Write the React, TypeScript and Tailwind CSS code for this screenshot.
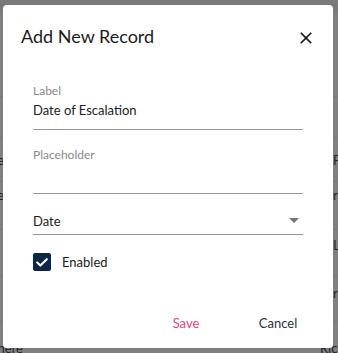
import { FC } from "react";

const rows = [
  { h: "h-[84px]", left: "", right: "", pt: "pt-[20px]", lw: "w-[4px]", rw: "w-[16px]" },
  { h: "h-[41px]", left: "", right: "", pt: "pt-[12px]", lw: "w-[4px]", rw: "w-[16px]" },
  { h: "h-[44px]", left: "Date", right: "Pro", pt: "pt-[14px]", lw: "w-[4px]", rw: "w-[5px]" },
  { h: "h-[48px]", left: "Type", right: "ro", pt: "pt-[5px]", lw: "w-[4px]", rw: "w-[5px]" },
  { h: "h-[47px]", left: "", right: "Lu", pt: "pt-[7px]", lw: "w-[4px]", rw: "w-[5px]" },
  { h: "h-[45px]", left: "", right: "ro", pt: "pt-[8px]", lw: "w-[4px]", rw: "w-[5px]" },
  { h: "h-[40px]", left: "Where", right: "Rick", pt: "pt-[18px]", lw: "w-[23px]", rw: "w-[18px]" },
];

const Field: FC<{ label: string; value?: string }> = ({ label, value }) => (
  <div className="flex flex-col border-b border-[#949494] pb-[10px]">
    <span className="text-[12px] leading-[15px] text-[#8a8a8a]">{label}</span>
    <span className="mt-[4px] h-[17px] text-[13px] leading-[17px] text-[#212121]">
      {value}
    </span>
  </div>
);

export default function App() {
  return (
    <div className="relative h-[353px] w-[338px] overflow-hidden bg-[#808080] font-['Lato',sans-serif]">
      {/* dimmed page behind the dialog */}
      <div className="flex flex-col text-[13px] leading-[17px] text-[#1e2530]">
        <div className="h-[13px] bg-[#7a7a7a]" />
        {rows.map((row, i) => (
          <div
            key={i}
            className={`flex justify-between border-b border-[#787878] ${row.h} ${row.pt}`}
          >
            <div className={`flex justify-end whitespace-nowrap ${row.lw}`}>
              {row.left}
            </div>
            <div className={`whitespace-nowrap ${row.rw}`}>{row.right}</div>
          </div>
        ))}
      </div>

      <div className="absolute left-[3px] top-[5px] flex h-[343px] w-[330px] flex-col rounded-[4px] bg-white">
        <div className="mt-[19px] flex h-[24px] items-start justify-between pl-[18px] pr-[17px]">
          <h2 className="text-[18px] leading-[24px] font-normal text-[#1b1b1b]">
            Add New Record
          </h2>
          <svg viewBox="0 0 24 24" className="mt-[4px] h-[20px] w-[20px] fill-[#1b1b1b]">
            <path d="M19 6.41L17.59 5 12 10.59 6.41 5 5 6.41 10.59 12 5 17.59 6.41 19 12 13.41 17.59 19 19 17.59 13.41 12z" />
          </svg>
        </div>

        <div className="mt-[35px] flex flex-col px-[30px]">
          <Field label="Label" value="Date of Escalation" />
          <div className="mt-[17px]">
            <Field label="Placeholder" />
          </div>
          <div className="mt-[19px] flex h-[22px] items-start justify-between border-b border-[#949494]">
            <span className="text-[13px] leading-[17px] text-[#212121]">Date</span>
            <svg viewBox="0 0 24 24" className="mr-[-3px] -mt-[5px] h-[24px] w-[24px] fill-[#757575]">
              <path d="M7 10l5 5 5-5z" />
            </svg>
          </div>
          <label className="mt-[18px] flex items-center gap-[11px]">
            <svg viewBox="0 0 18 18" className="h-[18px] w-[18px]">
              <rect width="18" height="18" rx="2" fill="#0f2747" />
              <polyline
                points="4.2,9.4 7.4,12.6 13.8,6.2"
                fill="none"
                stroke="#fff"
                strokeWidth="2.1"
                strokeLinecap="round"
                strokeLinejoin="round"
              />
            </svg>
            <span className="text-[13px] leading-[17px] text-[#212121]">Enabled</span>
          </label>
        </div>

        <div className="mt-[44px] flex justify-end gap-[28px] pr-[23px]">
          <button className="min-w-[64px] text-center text-[13px] leading-[17px] text-[#ec407a]">
            Save
          </button>
          <button className="min-w-[64px] text-center text-[13px] leading-[17px] text-[#2a3142]">
            Cancel
          </button>
        </div>
      </div>
    </div>
  );
}
